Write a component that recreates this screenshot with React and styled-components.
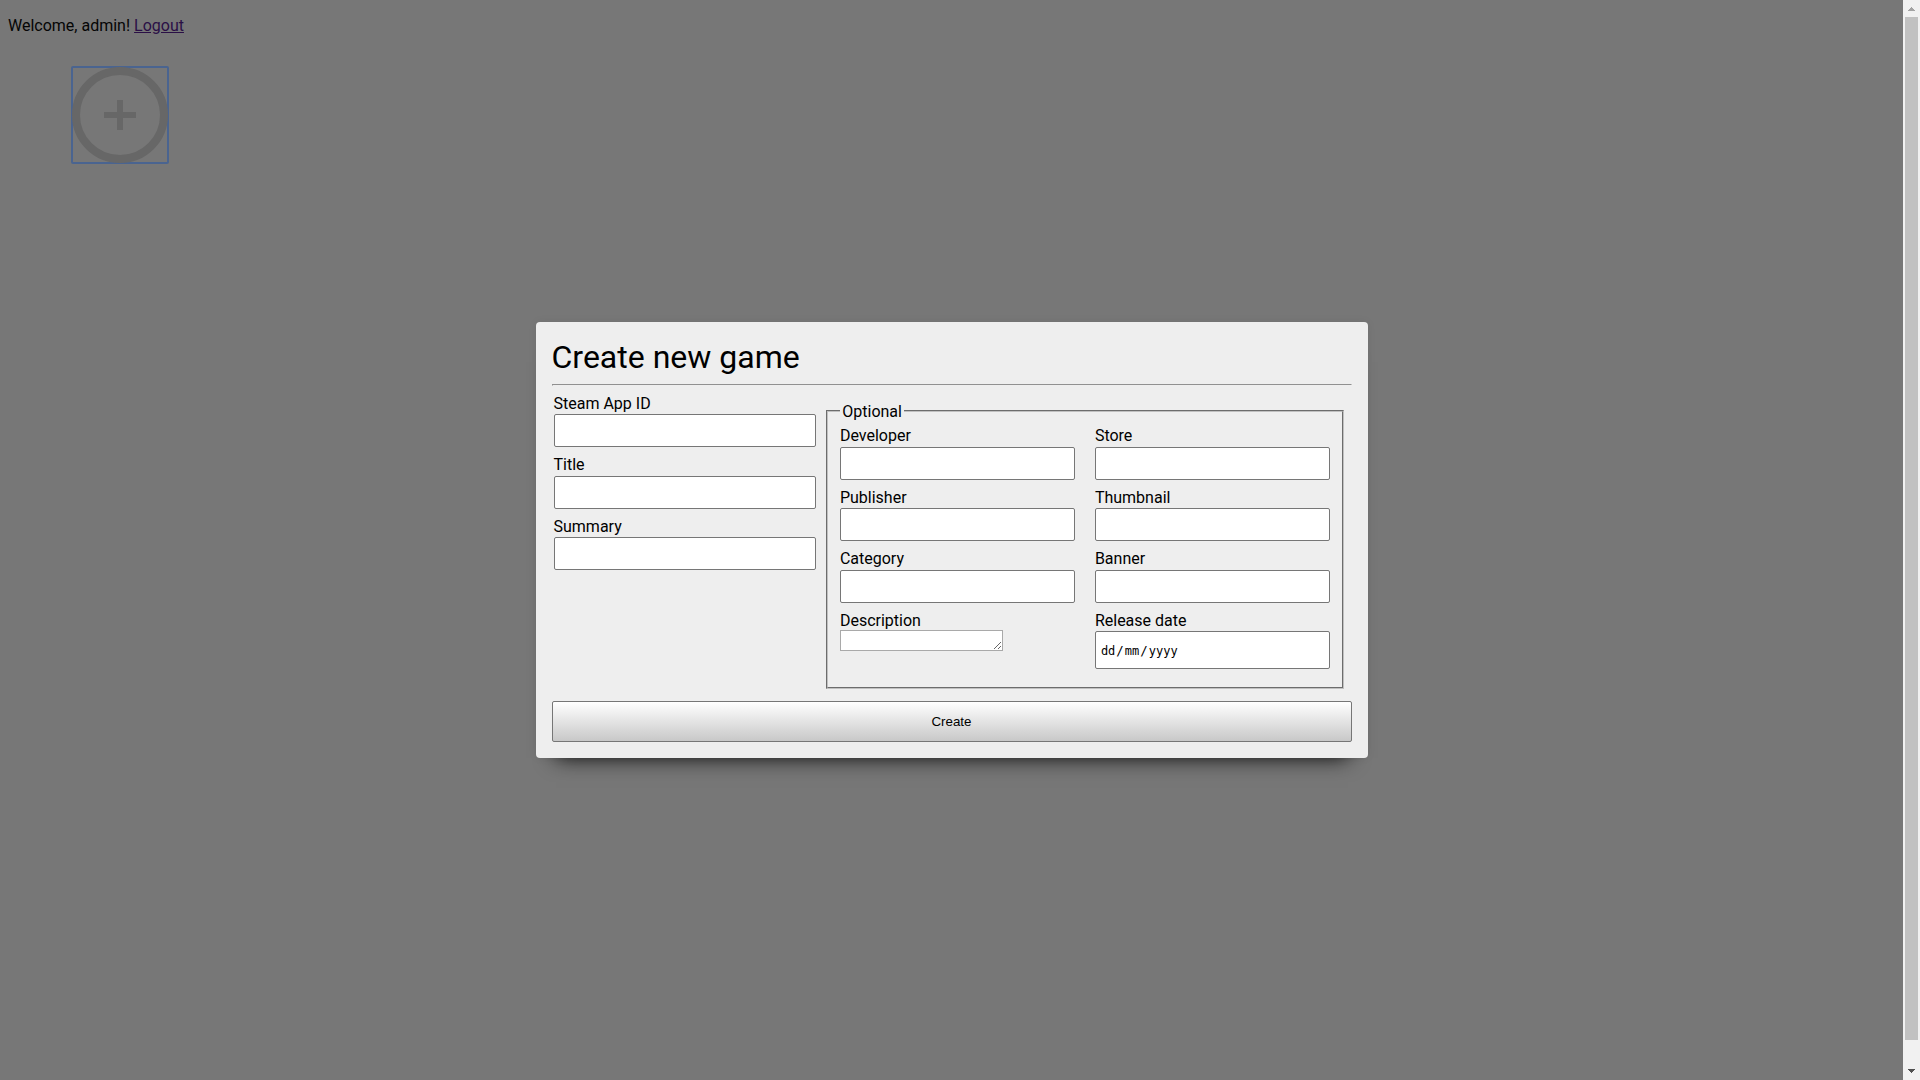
import React from "react";
import styled, { createGlobalStyle } from "styled-components";

const Global = createGlobalStyle`
  html, body { margin: 0; overflow: hidden; background: #777; }
  body { font-family: Roboto, "Liberation Sans", sans-serif; font-size: 16px; color: #000; }
  * { box-sizing: border-box; }
`;

const Screen = styled.div`
  display: grid;
  grid-template-columns: 1fr 17px;
  height: 1080px;
  position: relative;
`;

const Page = styled.main`
  padding: 16px 8px;
`;

const Welcome = styled.p`
  margin: 0;
  line-height: 19px;
  color: #050505;
`;

const Logout = styled.a`
  color: #2a0f46;
  text-decoration: underline;
`;

const AddButton = styled.button`
  display: block;
  margin: 31px 0 0 63px;
  width: 98px;
  height: 98px;
  padding: 0;
  background: none;
  border: 2px solid #4a6490;
  border-radius: 2px;
`;

const AddIcon = styled.svg`
  display: block;
  width: 94px;
  height: 94px;
  overflow: visible;
`;

const Scrollbar = styled.div`
  display: flex;
  flex-direction: column;
  align-items: center;
  background: #f1f1f1;
`;

const ScrollArrow = styled.svg`
  width: 17px;
  height: 17px;
  flex: none;
`;

const Track = styled.div`
  flex: 1;
  width: 13px;
`;

const Thumb = styled.div`
  height: 1023px;
  background: #c1c1c1;
`;

const Overlay = styled.div`
  position: absolute;
  inset: 0 17px 0 0;
  display: flex;
  align-items: center;
  justify-content: center;
`;

const Dialog = styled.form`
  width: 832px;
  height: 436px;
  padding: 16px;
  background: #eee;
  border-radius: 4px;
  box-shadow: 0 20px 20px -20px rgba(0, 0, 0, 0.9), 0 0 8px rgba(0, 0, 0, 0.07);
`;

const Title = styled.h1`
  margin: 0;
  height: 46px;
  font-size: 32px;
  line-height: 38px;
  font-weight: 400;
`;

const Divider = styled.hr`
  margin: 0;
  border: 1px solid;
  border-color: #909090 #eee #eee #909090;
  height: 2px;
`;

const Columns = styled.div`
  display: flex;
  align-items: flex-start;
  gap: 10px;
  height: 315px;
  padding: 8px 8px 0 2px;
`;

const Fields = styled.div`
  display: grid;
  grid-template-columns: repeat(${(p) => p.$columns}, ${(p) => p.$width}px);
  grid-auto-rows: ${(p) => p.$row}px;
  column-gap: 20px;
`;

const Field = styled.label`
  display: block;
`;

const Label = styled.span`
  display: block;
  line-height: 19px;
  height: ${(p) => p.$height || 20.4}px;
`;

const Input = styled.input`
  display: block;
  width: 100%;
  height: 33px;
  padding: 0 8px;
  border: 1px solid #767676;
  border-radius: 2px;
  background: #fff;
  outline: none;
`;

const DateInput = styled.div`
  display: flex;
  align-items: center;
  height: 38px;
  padding: 2px 4px 0;
  border: 1px solid #767676;
  border-radius: 2px;
  background: #fff;
  font: 12.4px "DejaVu Sans Mono", monospace;
`;

const DatePart = styled.span`
  padding: 0 1px;
  font-size: 12px;
`;

const TextArea = styled.textarea`
  display: block;
  width: 163px;
  height: 21px;
  margin: 0;
  padding: 2px;
  border: 1px solid #a9a9a9;
  background: #fff;
  resize: both;
  overflow: hidden;
`;

const Optional = styled.fieldset`
  width: 518px;
  height: 287.5px;
  margin: 7.5px 0 0;
  padding: 5.9px 11px 0 12.4px;
  border: 2px groove #c0c0c0;
`;

const Legend = styled.legend`
  padding: 0 2px 0 2.4px;
  line-height: 19px;
  height: 19px;
`;

const Submit = styled.button`
  display: block;
  width: 100%;
  height: 41px;
  padding: 0;
  border: 1px solid #767676;
  border-radius: 2px;
  background: linear-gradient(#fff, #c8c8c8);
  color: #000;
  font: 13.333px "Liberation Sans", Arial, sans-serif;
`;

const required = ["Steam App ID", "Title", "Summary"];
const optional = ["Developer", "Store", "Publisher", "Thumbnail", "Category", "Banner"];

const TextField = ({ label }) => (
  <Field>
    <Label>{label}</Label>
    <Input />
  </Field>
);

export default function App() {
  return (
    <Screen>
      <Global />
      <Page>
        <Welcome>
          Welcome, admin! <Logout>Logout</Logout>
        </Welcome>
        <AddButton type="button" aria-label="Add game">
          <AddIcon viewBox="0 0 94 94">
            <circle cx="47" cy="47" r="44" fill="none" stroke="#676767" strokeWidth="8" />
            <path d="M31 47h32M47 32v30" stroke="#676767" strokeWidth="6" />
          </AddIcon>
        </AddButton>
      </Page>
      <Scrollbar>
        <ScrollArrow viewBox="0 0 17 17" shapeRendering="crispEdges">
          <path d="M8 7h1v1h1v1h1v1h1v1H5v-1h1V9h1V8h1z" fill="#a3a3a3" />
        </ScrollArrow>
        <Track>
          <Thumb />
        </Track>
        <ScrollArrow viewBox="0 0 17 17" shapeRendering="crispEdges">
          <path d="M5 6h7v1h-1v1h-1v1H9v1H8V9H7V8H6V7H5z" fill="#505050" />
        </ScrollArrow>
      </Scrollbar>
      <Overlay>
        <Dialog>
          <Title>Create new game</Title>
          <Divider />
          <Columns>
            <Fields $columns={1} $width={262} $row={61.333}>
              {required.map((name) => (
                <TextField key={name} label={name} />
              ))}
            </Fields>
            <Optional>
              <Legend>Optional</Legend>
              <Fields $columns={2} $width={235} $row={61.4}>
                {optional.map((name) => (
                  <TextField key={name} label={name} />
                ))}
                <Field>
                  <Label $height={19.2}>Description</Label>
                  <TextArea />
                </Field>
                <Field>
                  <Label>Release date</Label>
                  <DateInput>
                    <DatePart>dd</DatePart>/<DatePart>mm</DatePart>/<DatePart>yyyy</DatePart>
                  </DateInput>
                </Field>
              </Fields>
            </Optional>
          </Columns>
          <Submit type="button">Create</Submit>
        </Dialog>
      </Overlay>
    </Screen>
  );
}
